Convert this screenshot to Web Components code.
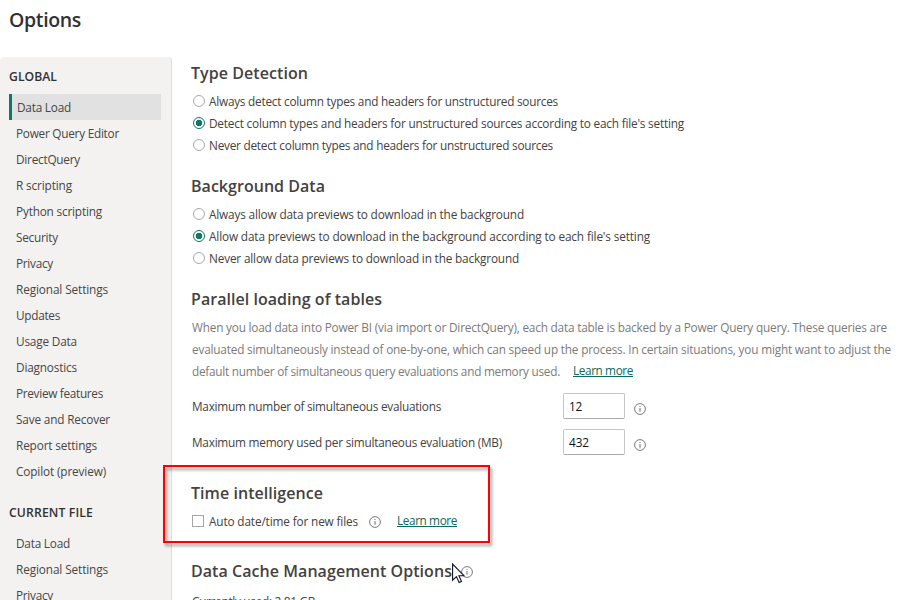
<!DOCTYPE html>
<html lang="en">
<head>
<meta charset="utf-8">
<title>Options</title>
<style>
html,body{margin:0;height:600px;overflow:hidden;background:#fff}
</style>
</head>
<body>
<options-dialog></options-dialog>
<script>
const FONT = '"Open Sans","Noto Sans",sans-serif';
const define = (name, html, setup) => {
  const t = document.createElement('template');
  t.innerHTML = html;
  customElements.define(name, class extends HTMLElement {
    connectedCallback() {
      if (this.shadowRoot) return;
      this.attachShadow({mode: 'open'}).append(t.content.cloneNode(true));
      if (setup) setup(this, this.shadowRoot);
    }
  });
};

/* A line of text whose tracking is adjusted to fill the width in its "w" attribute. */
define('fit-text', `<style>:host{display:inline-block;white-space:pre}span{display:inline-block}</style><span><slot></slot></span>`, (el, root) => {
  const s = root.querySelector('span');
  const w = +el.getAttribute('w');
  const n = el.textContent.length;
  s.style.letterSpacing = ((w - s.getBoundingClientRect().width) / n) + 'px';
  el.style.width = w + 'px';
});

define('nav-group', `<style>
:host{display:block}
h2{margin:0;padding-left:9px;height:37px;line-height:39px;font-size:12.2px;font-weight:600;color:#323130}
</style><h2></h2><slot></slot>`, (el, root) => {
  root.querySelector('h2').innerHTML = `<fit-text w="${el.getAttribute('w')}">${el.getAttribute('label')}</fit-text>`;
});

define('nav-item', `<style>
:host{display:block;box-sizing:border-box;height:26px;line-height:26px;margin:0 10px 0 9px;padding-left:7px;color:#484644}
:host([selected]){background:#e1e1e1;border-left:3px solid #117865;padding-left:5px}
</style><slot></slot>`);

define('option-section', `<style>
:host{display:block}
h1{margin:0 0 0 -1px;height:33px;line-height:32px;font-size:16px;font-weight:600;color:#444240;display:flex}
</style><h1></h1><slot></slot>`, (el, root) => {
  const h = root.querySelector('h1');
  h.innerHTML = `<fit-text w="${el.getAttribute('w')}">${el.getAttribute('label')}</fit-text><slot name="after"></slot>`;
});

define('option-radio', `<style>
:host{display:flex;align-items:center;height:22px;gap:4px;padding-left:1px;line-height:22px}
i{box-sizing:border-box;width:12px;height:12px;border:1px solid #a8a8a8;border-radius:50%;background:#fff}
:host([checked]) i{border-color:#117865;background:radial-gradient(circle,#117865 0 3px,#fff 3.6px)}
::slotted(fit-text){margin-top:-1px}
</style><i></i><slot></slot>`);

define('option-check', `<style>
:host{display:flex;align-items:center;height:22px;line-height:22px}
i{box-sizing:border-box;width:12px;height:12px;border:1px solid #a8a6a4;background:#fff;margin-right:5px}
::slotted(fit-text),::slotted(text-link){margin-top:-1px}
</style><i></i><slot></slot>`);

define('info-icon', `<style>:host{display:block;width:12px;height:12px}svg{display:block}</style>
<svg width="12" height="12" viewBox="0 0 12 12"><circle cx="6" cy="6" r="5.4" fill="none" stroke="#6e6c6a" stroke-width=".9"/><path d="M6 5v3.8" stroke="#6e6c6a" stroke-width="1"/><circle cx="6" cy="3.5" r=".6" fill="#6e6c6a"/></svg>`);

define('text-link', `<style>:host{display:inline-block;color:#0b6a5a;height:17px;line-height:17px}
span{display:block;background:linear-gradient(currentColor,currentColor) 0 14px/100% 1px no-repeat}</style><span><slot></slot></span>`);

define('number-row', `<style>
:host{display:flex;align-items:center;height:36px}
div{width:371px}
b{box-sizing:border-box;width:62px;height:26px;line-height:25px;border:1px solid #c8c6c4;border-bottom-color:#acaaa8;border-radius:2px;padding-left:5px;font-weight:400;color:#111;background:#fff;margin-right:9px}
info-icon{margin-top:5px}
</style><div><slot></slot></div><b></b><info-icon></info-icon>`, (el, root) => {
  root.querySelector('b').innerHTML = `<fit-text w="${el.getAttribute('w')}">${el.getAttribute('value')}</fit-text>`;
});

define('highlight-frame', `<style>:host{position:absolute;left:163px;top:465px;box-sizing:border-box;width:327px;height:78px;border:2px solid #fe0000;filter:drop-shadow(2px 3px 1.5px #0006)}</style>`);

define('mouse-pointer', `<style>:host{position:absolute;left:452px;top:563px}svg{display:block}</style>
<svg width="13" height="21" viewBox="0 0 13 21"><path d="M.6 1v16.2l3.8-3.6 2.7 5.9 2.4-1.1-2.6-5.7h5z" fill="#fff" stroke="#111126" stroke-width="1.1"/></svg>`);

define('options-dialog', `<style>
:host{display:block;position:relative;width:915px;height:600px;overflow:hidden;font:11.8px ${FONT};color:#444240;background:#fff}
header{height:57px;box-sizing:border-box;padding:5px 0 0 9px;line-height:30px;font-size:19.5px;font-weight:600;color:#323130}
main{display:flex;height:543px}
nav{box-sizing:border-box;width:172px;flex:none;background:#f3f2f1;border-right:1px solid #dedddc;border-radius:4px 4px 0 0}
nav-group + nav-group{margin-top:9px}
article{padding-left:20px;flex:1}
.g14{margin-top:14px}.g17{margin-top:17px}.g23{margin-top:23px}
.para{padding:0 0 6px 0;color:#7c7a78;line-height:22px}
.para>div{display:flex;align-items:center;height:22px}
.para fit-text,.para text-link{margin-top:-1px}
</style>
<header><fit-text w="72">Options</fit-text></header>
<main>
<nav>
<nav-group label="GLOBAL" w="48">
<nav-item selected><fit-text w="54">Data Load</fit-text></nav-item>
<nav-item><fit-text w="103">Power Query Editor</fit-text></nav-item>
<nav-item><fit-text w="64">DirectQuery</fit-text></nav-item>
<nav-item><fit-text w="56">R scripting</fit-text></nav-item>
<nav-item><fit-text w="86">Python scripting</fit-text></nav-item>
<nav-item><fit-text w="42">Security</fit-text></nav-item>
<nav-item><fit-text w="37">Privacy</fit-text></nav-item>
<nav-item><fit-text w="92">Regional Settings</fit-text></nav-item>
<nav-item><fit-text w="44">Updates</fit-text></nav-item>
<nav-item><fit-text w="61">Usage Data</fit-text></nav-item>
<nav-item><fit-text w="61">Diagnostics</fit-text></nav-item>
<nav-item><fit-text w="87">Preview features</fit-text></nav-item>
<nav-item><fit-text w="94">Save and Recover</fit-text></nav-item>
<nav-item><fit-text w="81">Report settings</fit-text></nav-item>
<nav-item><fit-text w="90">Copilot (preview)</fit-text></nav-item>
</nav-group>
<nav-group label="CURRENT FILE" w="84">
<nav-item><fit-text w="54">Data Load</fit-text></nav-item>
<nav-item><fit-text w="92">Regional Settings</fit-text></nav-item>
<nav-item><fit-text w="37">Privacy</fit-text></nav-item>
</nav-group>
</nav>
<article>
<option-section label="Type Detection" w="117">
<option-radio><fit-text w="349">Always detect column types and headers for unstructured sources</fit-text></option-radio>
<option-radio checked><fit-text w="475">Detect column types and headers for unstructured sources according to each file's setting</fit-text></option-radio>
<option-radio><fit-text w="344">Never detect column types and headers for unstructured sources</fit-text></option-radio>
</option-section>
<option-section class="g14" label="Background Data" w="134">
<option-radio><fit-text w="315">Always allow data previews to download in the background</fit-text></option-radio>
<option-radio checked><fit-text w="441">Allow data previews to download in the background according to each file's setting</fit-text></option-radio>
<option-radio><fit-text w="310">Never allow data previews to download in the background</fit-text></option-radio>
</option-section>
<option-section class="g14" label="Parallel loading of tables" w="191">
<div class="para">
<div><fit-text w="695">When you load data into Power BI (via import or DirectQuery), each data table is backed by a Power Query query. These queries are</fit-text></div>
<div><fit-text w="699">evaluated simultaneously instead of one-by-one, which can speed up the process. In certain situations, you might want to adjust the</fit-text></div>
<div><fit-text w="368">default number of simultaneous query evaluations and memory used.</fit-text><text-link style="margin-left:13px"><fit-text w="60" style="margin:0">Learn more</fit-text></text-link></div>
</div>
<number-row value="12" w="13"><fit-text w="249">Maximum number of simultaneous evaluations</fit-text></number-row>
<number-row value="432" w="20"><fit-text w="310">Maximum memory used per simultaneous evaluation (MB)</fit-text></number-row>
</option-section>
<option-section class="g17" label="Time intelligence" w="132">
<option-check><fit-text w="149">Auto date/time for new files</fit-text><info-icon style="margin:1px 16px 0 11px"></info-icon><text-link><fit-text w="60">Learn more</fit-text></text-link></option-check>
</option-section>
<option-section class="g23" label="Data Cache Management Options" w="261">
<info-icon slot="after" style="margin:11px 0 0 9px"></info-icon>
<div style="line-height:27px"><fit-text w="123">Currently used: 2.81 GB</fit-text></div>
</option-section>
</article>
</main>
<highlight-frame></highlight-frame>
<mouse-pointer></mouse-pointer>`);
</script>
</body>
</html>
